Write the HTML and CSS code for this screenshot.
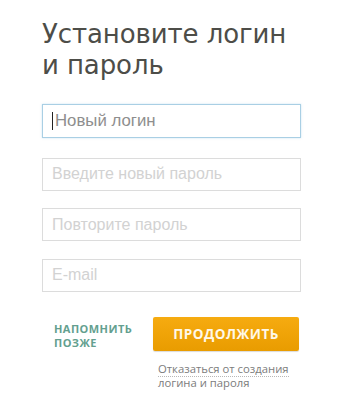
FILE: index.html
```html
<!DOCTYPE html>
<html lang="ru">
<head>
<meta charset="utf-8">
<link rel="stylesheet" href="styles.css">
</head>
<body>
<div class="page">
  <h1 class="title">Установите логин<br>и пароль</h1>
  <form class="form">
    <div class="field field-focus"><span class="caret"></span><span class="ph ph-dark">Новый логин</span></div>
    <div class="field"><span class="ph">Введите новый пароль</span></div>
    <div class="field"><span class="ph">Повторите пароль</span></div>
    <div class="field"><span class="ph">E-mail</span></div>
  </form>
  <div class="actions">
    <a class="later">НАПОМНИТЬ<br>ПОЗЖЕ</a>
    <div class="main">
      <button class="btn" type="button">ПРОДОЛЖИТЬ</button>
      <a class="decline"><span class="dotted">Отказаться от создания</span><br><span class="dotted">логина и пароля</span></a>
    </div>
  </div>
</div>
</body>
</html>
```
FILE: styles.css
```css
html, body {
  margin: 0;
  padding: 0;
  background: #ffffff;
}
.page {
  padding: 19px 0 0 42px;
  width: 308px;
}
.title {
  margin: 0;
  font-family: "DejaVu Sans", sans-serif;
  font-weight: normal;
  font-size: 26px;
  line-height: 31px;
  color: #4d4d48;
  letter-spacing: -0.1px;
}
.form {
  margin: 23px 0 0 0;
  display: flex;
  flex-direction: column;
  gap: 17.5px;
}
.field {
  box-sizing: border-box;
  width: 259px;
  height: 33px;
  border: 1px solid #dcdcdc;
  display: flex;
  align-items: center;
  padding-left: 9px;
  font-family: "Liberation Sans", Arial, sans-serif;
  font-size: 16px;
}
.field-focus {
  height: 34px;
  border-color: #a9cfe4;
  box-shadow: 0 0 2px rgba(150, 200, 230, 0.5);
  margin-bottom: 2px;
}
.caret {
  width: 1px;
  height: 18px;
  background: #222;
  margin-right: 2px;
}
.ph {
  color: #d2d2d2;
}
.ph-dark {
  color: #8e8e8e;
  font-size: 16.8px;
}
.actions {
  margin-top: 25px;
  display: flex;
  align-items: flex-start;
}
.later {
  margin: 5px 0 0 12px;
  width: 99px;
  font-family: "Open Sans", sans-serif;
  font-weight: bold;
  font-size: 11px;
  line-height: 14.5px;
  letter-spacing: 0.45px;
  color: #649f8f;
}
.main {
  display: flex;
  flex-direction: column;
}
.btn {
  box-sizing: border-box;
  width: 146px;
  height: 34px;
  border: none;
  border-radius: 2px;
  background: linear-gradient(#f6ab10, #e99c00);
  box-shadow: 0 1px 1px rgba(0, 0, 0, 0.15);
  color: #fff8e8;
  font-family: "Open Sans", sans-serif;
  font-weight: bold;
  font-size: 13.5px;
  letter-spacing: 0.5px;
  padding: 0;
}
.decline {
  margin: 11px 0 0 5px;
  font-family: "Open Sans", sans-serif;
  font-size: 11.3px;
  line-height: 14px;
  color: #7c7c7c;
}
.dotted {
  border-bottom: 1px dotted #b8b8b8;
}
```
